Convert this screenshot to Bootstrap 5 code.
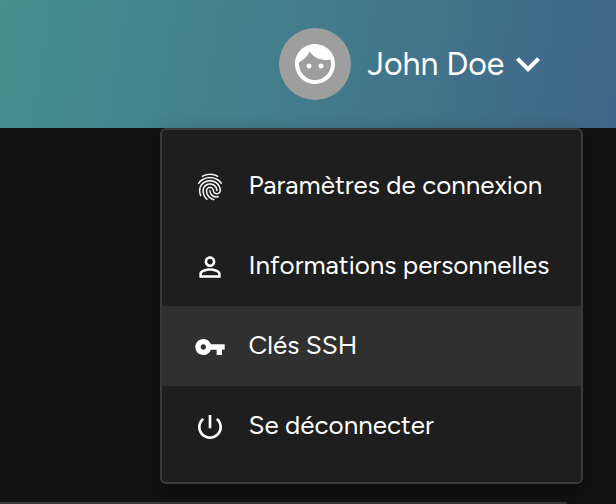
<!DOCTYPE html>
<html lang="fr" data-bs-theme="dark">
<head>
<meta charset="utf-8">
<meta name="viewport" content="width=device-width, initial-scale=1">
<title>Menu utilisateur</title>
<link href="https://cdn.jsdelivr.net/npm/bootstrap@5.3.0/dist/css/bootstrap.min.css" rel="stylesheet">
<style>
body{background:#121212;color:#fff;font-family:Figtree,Lato,"Liberation Sans",sans-serif}
.app-bar{height:128px;background:linear-gradient(100deg,#468e90 0%,#437e8c 45%,#3f6688 100%);padding-left:279px}
.avatar{width:72px;height:72px;background:#9e9e9e}
.user-name{font-size:32px;line-height:40px;margin-left:16.5px;width:137px}
.chevron{margin-left:-.5px}
.user-menu{left:160px;top:128px;width:423px;height:356px;border:2px solid #3a3a3a;border-radius:6px;background:#1e1e1e;padding:16px 0;box-shadow:0 8px 20px rgba(0,0,0,.35)}
.user-menu .dropdown-item{height:80px;padding:0 0 0 32px;color:#fff;font-size:26px;line-height:36px}
.user-menu .dropdown-item.active{background:#303030}
.user-menu svg{margin-top:2px;flex:none}
.label{margin-left:22.5px;padding-bottom:2px}
.panel{height:2px;width:567px;margin-top:374px;border-top:2px solid #3a3838;border-radius:0 4px 0 0}
</style>
<script src="https://cdn.jsdelivr.net/npm/bootstrap@5.3.0/dist/js/bootstrap.bundle.min.js"></script>
</head>
<body class="vh-100 overflow-hidden position-relative">
<header class="app-bar d-flex align-items-center">
  <span class="avatar rounded-circle d-flex align-items-center justify-content-center">
    <svg width="48" height="48" viewBox="0 0 24 24" fill="#fff"><path d="M9 11.75c-.69 0-1.25.56-1.25 1.25s.56 1.25 1.25 1.25 1.25-.56 1.25-1.25-.56-1.25-1.25-1.25zm6 0c-.69 0-1.25.56-1.25 1.25s.56 1.25 1.25 1.25 1.25-.56 1.25-1.25-.56-1.25-1.25-1.25zM12 2C6.48 2 2 6.48 2 12s4.480 10 10 10 10-4.480 10-10S17.520 2 12 2zm0 18c-4.410 0-8-3.590-8-8 0-.29.02-.58.05-.86 2.360-1.050 4.230-2.980 5.210-5.370C11.070 8.330 14.050 10 17.420 10c.78 0 1.530-.09 2.250-.26.21.71.33 1.470.33 2.260 0 4.410-3.590 8-8 8z"/></svg>
  </span>
  <span class="user-name text-nowrap">John Doe</span>
  <svg class="chevron" width="48" height="48" viewBox="0 0 24 24" fill="#fff"><path d="M16.590 8.590 12 13.170 7.410 8.590 6 10l6 6 6-6z"/></svg>
</header>
<main><div class="panel"></div></main>
<nav class="user-menu position-absolute">
  <a class="dropdown-item d-flex align-items-center" href="#">
    <svg width="32" height="32" viewBox="0 0 24 24" fill="#fff" stroke="#fff" stroke-width=".12"><path d="M17.810 4.470c-.08 0-.16-.02-.23-.06C15.660 3.420 14 3 12.010 3c-1.980 0-3.860.47-5.570 1.410-.24.13-.54.04-.68-.2-.13-.24-.04-.55.2-.68C7.820 2.520 9.860 2 12.010 2c2.130 0 3.990.47 6.030 1.520.25.13.34.43.21.67-.09.18-.26.28-.44.28zM3.500 9.720c-.1 0-.2-.03-.29-.09-.23-.16-.28-.47-.12-.7.99-1.400 2.250-2.500 3.750-3.270C9.980 4.040 14 4.030 17.150 5.650c1.500.77 2.760 1.860 3.750 3.250.16.22.11.54-.12.7-.23.16-.54.11-.7-.12-.9-1.260-2.040-2.250-3.390-2.940-2.870-1.470-6.540-1.470-9.400.01-1.360.7-2.500 1.700-3.400 2.960-.08.14-.23.21-.39.21zm6.250 12.070c-.13 0-.26-.05-.35-.15-.87-.87-1.340-1.430-2.010-2.640-.69-1.230-1.050-2.730-1.050-4.340 0-2.970 2.540-5.390 5.660-5.390s5.660 2.420 5.660 5.390c0 .28-.22.5-.5.5s-.5-.22-.5-.5c0-2.420-2.090-4.390-4.660-4.390-2.570 0-4.660 1.970-4.660 4.390 0 1.440.32 2.770.93 3.850.64 1.150 1.080 1.640 1.850 2.420.19.2.19.51 0 .71-.11.1-.24.15-.37.15zm7.170-1.850c-1.190 0-2.240-.3-3.100-.89-1.490-1.010-2.380-2.650-2.380-4.390 0-.28.22-.5.5-.5s.5.22.5.5c0 1.410.72 2.740 1.940 3.560.71.48 1.540.71 2.540.71.24 0 .64-.03 1.040-.1.27-.05.53.13.58.41.05.27-.13.53-.41.58-.57.11-1.070.12-1.210.12zM14.910 22c-.04 0-.09-.01-.13-.02-1.590-.44-2.630-1.030-3.720-2.100-1.400-1.390-2.170-3.240-2.170-5.220 0-1.620 1.380-2.940 3.080-2.940 1.700 0 3.080 1.320 3.080 2.940 0 1.070.93 1.940 2.080 1.940s2.080-.87 2.080-1.940c0-3.770-3.250-6.830-7.250-6.830-2.840 0-5.440 1.580-6.610 4.030-.39.81-.59 1.760-.59 2.800 0 .78.07 2.010.67 3.610.1.26-.03.55-.29.64-.26.1-.55-.04-.64-.29-.49-1.310-.73-2.610-.73-3.960 0-1.200.23-2.290.68-3.240 1.330-2.790 4.280-4.600 7.510-4.600 4.550 0 8.250 3.510 8.250 7.830 0 1.620-1.380 2.940-3.080 2.940s-3.080-1.320-3.080-2.940c0-1.070-.93-1.940-2.080-1.940s-2.080.87-2.080 1.940c0 1.710.66 3.310 1.870 4.510.95.94 1.860 1.460 3.270 1.850.27.07.42.35.35.61-.05.23-.26.38-.47.38z"/></svg>
    <span class="label">Paramètres de connexion</span>
  </a>
  <a class="dropdown-item d-flex align-items-center" href="#">
    <svg width="32" height="32" viewBox="0 0 24 24" fill="#fff"><path d="M12 5.900c1.160 0 2.100.94 2.100 2.100s-.94 2.100-2.100 2.100S9.900 9.160 9.900 8s.94-2.100 2.100-2.100m0 9c2.970 0 6.100 1.460 6.100 2.100v1.100H5.900V17c0-.64 3.130-2.100 6.100-2.100M12 4C9.790 4 8 5.790 8 8s1.790 4 4 4 4-1.790 4-4-1.790-4-4-4zm0 9c-2.670 0-8 1.340-8 4v3h16v-3c0-2.660-5.330-4-8-4z"/></svg>
    <span class="label">Informations personnelles</span>
  </a>
  <a class="dropdown-item active d-flex align-items-center" href="#">
    <svg width="32" height="32" viewBox="0 0 24 24" fill="#fff"><path d="M12.650 10C11.830 7.670 9.610 6 7 6c-3.310 0-6 2.690-6 6s2.690 6 6 6c2.610 0 4.830-1.670 5.650-4H17v4h4v-4h2v-4H12.650zM7 14c-1.100 0-2-.9-2-2s.9-2 2-2 2 .9 2 2-.9 2-2 2z"/></svg>
    <span class="label">Clés SSH</span>
  </a>
  <a class="dropdown-item d-flex align-items-center" href="#">
    <svg width="32" height="32" viewBox="0 0 24 24" fill="#fff"><path d="M13 3h-2v10h2V3zm4.830 2.170-1.420 1.420C17.990 7.860 19 9.810 19 12c0 3.870-3.130 7-7 7s-7-3.130-7-7c0-2.190 1.010-4.140 2.580-5.420L6.170 5.170C4.230 6.820 3 9.260 3 12c0 4.970 4.030 9 9 9s9-4.030 9-9c0-2.740-1.230-5.180-3.170-6.830z"/></svg>
    <span class="label">Se déconnecter</span>
  </a>
</nav>
</body>
</html>
